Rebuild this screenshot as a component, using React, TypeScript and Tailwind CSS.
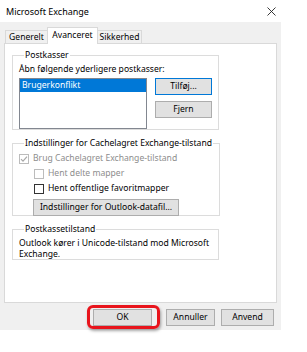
import React from 'react';

const font = { fontFamily: '"Noto Sans", "Open Sans", Arial, sans-serif' };

function Check({ checked, disabled }: { checked?: boolean; disabled?: boolean }) {
    return (
        <span
            className={`w-[10px] h-[10px] border flex items-center justify-center bg-white shrink-0 ${
                disabled ? 'border-[#bcbcbc]' : 'border-[#333333]'
            }`}
        >
            {checked && (
                <svg width="8" height="8" viewBox="0 0 8 8">
                    <path d="M1 4.2 L3 6.2 L7 1.6" fill="none" stroke={disabled ? '#a8a8a8' : '#333'} strokeWidth="1.2" />
                </svg>
            )}
        </span>
    );
}

function Btn({ label, className = '', primary }: { label: string; className?: string; primary?: boolean }) {
    return (
        <div
            className={`h-[17px] flex items-center justify-center bg-[#e1e1e1] border ${
                primary ? 'border-[#0078d7]' : 'border-[#adadad]'
            } text-[#000] whitespace-nowrap ${className}`}
        >
            {label}
        </div>
    );
}

function Group({ title, children, className = '' }: { title: string; children: React.ReactNode; className?: string }) {
    return (
        <fieldset className={`border border-[#dcdcdc] w-[207px] px-[6px] ${className}`}>
            <legend className="ml-[5px] px-[1px] leading-[10px] whitespace-nowrap">{title}</legend>
            {children}
        </fieldset>
    );
}

export default function App() {
    return (
        <div className="w-[307px] h-[352px] bg-white text-[8.6px] text-[#000]" style={font}>
            <div className="w-[281px] h-[330px] bg-[#f0f0f0] flex flex-col">
                {/* title bar */}
                <div className="h-[22px] bg-white flex items-center justify-between pl-[6px] pr-[5px] text-[9px]">
                    <span className="pt-[1px]">Microsoft Exchange</span>
                    <svg width="9" height="9" viewBox="0 0 9 9">
                        <path d="M0.5 0.5 L8.5 8.5 M8.5 0.5 L0.5 8.5" stroke="#222" strokeWidth="0.9" />
                    </svg>
                </div>

                {/* tabs */}
                <div className="flex items-end h-[17px] pl-[5px] mt-[4px]">
                    <div className="h-[13px] w-[43px] flex items-center justify-center border border-b-0 border-[#d9d9d9] bg-[#f0f0f0] -mr-[1px]">
                        Generelt
                    </div>
                    <div className="h-[17px] w-[51px] flex items-center justify-center border border-b-0 border-[#d9d9d9] bg-white relative z-10 -mb-[1px] pb-[2px]">
                        Avanceret
                    </div>
                    <div className="h-[13px] w-[45px] flex items-center justify-center border border-b-0 border-[#d9d9d9] bg-[#f0f0f0] -ml-[1px]">
                        Sikkerhed
                    </div>
                </div>

                {/* panel */}
                <div className="ml-[4px] w-[273px] h-[260px] bg-white border border-[#d9d9d9] pl-[7px] pt-[6px] flex flex-col">
                    <Group title="Postkasser" className="h-[80px]">
                        <div className="pt-[4px] leading-[11px]">Åbn følgende yderligere postkasser:</div>
                        <div className="flex mt-[3px]">
                            <div className="w-[128px] h-[51px] border border-[#828790] bg-white">
                                <div className="h-[13px] bg-[#0078d7] text-white flex items-center pl-[2px]">Brugerkonflikt</div>
                            </div>
                            <div className="ml-[8px] flex flex-col gap-[6px]">
                                <Btn label="Tilføj..." primary className="w-[57px]" />
                                <Btn label="Fjern" className="w-[57px]" />
                            </div>
                        </div>
                    </Group>

                    <Group title="Indstillinger for Cachelagret Exchange-tilstand" className="h-[78px] mt-[8px]">
                        <div className="flex items-center gap-[4px] pt-[5px] text-[#8d8d8d] leading-[11px]">
                            <Check checked disabled />
                            <span>Brug Cachelagret Exchange-tilstand</span>
                        </div>
                        <div className="flex items-center gap-[4px] pt-[4px] pl-[15px] text-[#8d8d8d] leading-[11px]">
                            <Check disabled />
                            <span>Hent delte mapper</span>
                        </div>
                        <div className="flex items-center gap-[4px] pt-[4px] pl-[15px] leading-[11px]">
                            <Check />
                            <span>Hent offentlige favoritmapper</span>
                        </div>
                        <div className="pl-[14px] pt-[5px]">
                            <Btn label="Indstillinger for Outlook-datafil..." className="w-[146px]" />
                        </div>
                    </Group>

                    <Group title="Postkassetilstand" className="h-[36px] mt-[8px]">
                        <div className="pt-[4px] leading-[11px]">
                            Outlook kører i Unicode-tilstand mod Microsoft
                            <br />
                            Exchange.
                        </div>
                    </Group>
                </div>

                {/* dialog buttons */}
                <div className="flex items-center mt-[6px] h-[17px]">
                    <div className="ml-[93px] relative">
                        <Btn label="OK" className="w-[59px] border-[#7a7a7a]" />
                        <div className="absolute -left-[6px] -right-[8px] -top-[4px] -bottom-[3px] border-[3px] border-[#e8141c] rounded-[6px] shadow-[1px_2px_3px_rgba(0,0,0,0.35)]" />
                    </div>
                    <Btn label="Annuller" className="w-[49px] ml-[14px]" />
                    <Btn label="Anvend" className="w-[53px] ml-[6px]" />
                </div>
            </div>
        </div>
    );
}
